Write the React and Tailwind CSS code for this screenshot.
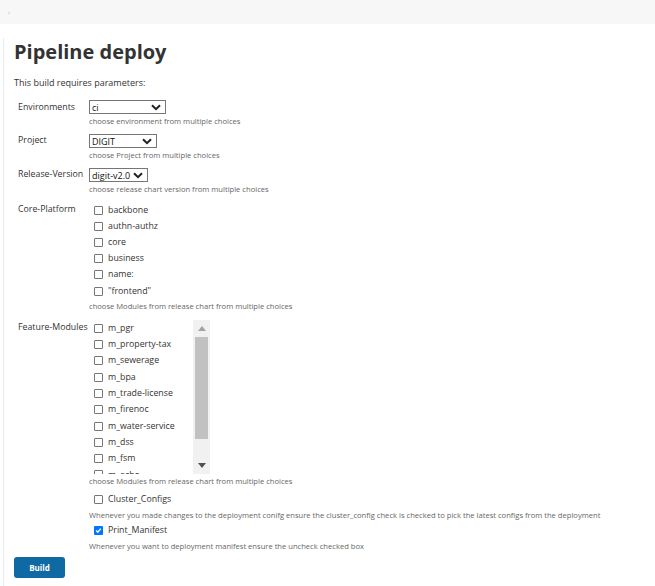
import React from 'react';

const corePlatform = ['backbone', 'authn-authz', 'core', 'business', 'name:', '"frontend"'];
const featureModules = [
  'm_pgr',
  'm_property-tax',
  'm_sewerage',
  'm_bpa',
  'm_trade-license',
  'm_firenoc',
  'm_water-service',
  'm_dss',
  'm_fsm',
  'm_echo',
];

function Chevron() {
  return (
    <svg width="10" height="7" viewBox="0 0 10 7" className="shrink-0">
      <path d="M1 1.2 L5 5.2 L9 1.2" fill="none" stroke="#222" strokeWidth="2" />
    </svg>
  );
}

function Select({ value, width }) {
  return (
    <div className={`flex h-[14px] shrink-0 items-center justify-between whitespace-nowrap border border-[#767676] bg-white pl-[2px] pr-[4px] text-[9px] leading-none text-[#111] ${width}`}>
      <span>{value}</span>
      <Chevron />
    </div>
  );
}

function Checkbox({ checked }) {
  if (checked) {
    return (
      <span className="flex h-[9px] w-[9px] items-center justify-center rounded-[1px] bg-[#0075ff]">
        <svg width="7" height="7" viewBox="0 0 7 7">
          <path d="M1.2 3.6 L2.8 5.2 L5.8 1.6" fill="none" stroke="#fff" strokeWidth="1.4" />
        </svg>
      </span>
    );
  }
  return <span className="block h-[9px] w-[9px] rounded-[1px] border border-[#767676] bg-white" />;
}

function CheckItem({ label, checked, height = 'h-[16px]' }) {
  return (
    <div className={`flex shrink-0 items-center whitespace-nowrap ${height}`}>
      <span className="ml-[5px] mr-[5px]">
        <Checkbox checked={checked} />
      </span>
      <span className="text-[8.8px] leading-none text-[#333]">{label}</span>
    </div>
  );
}

function Desc({ children, className = '' }) {
  return (
    <div className={`flex h-[12px] items-center whitespace-nowrap text-[7.6px] leading-none text-[#666] ${className}`}>
      {children}
    </div>
  );
}

function Label({ children, className = '' }) {
  return (
    <div className={`w-[75px] shrink-0 whitespace-nowrap pl-[4px] text-[8.8px] leading-none text-[#333] ${className}`}>
      {children}
    </div>
  );
}

export default function App() {
  return (
    <div className="min-h-[586px] w-[655px] bg-white font-['Open_Sans','Noto_Sans',sans-serif]">
      <div className="flex h-[24px] items-center bg-[#f7f7f7] pl-[8px]">
        <span className="text-[7px] leading-none text-[#bbb]">›</span>
      </div>
      <div className="ml-[3px] min-h-[562px] border-l border-[#e6ecef] pl-[10px]">
        <h1 className="mt-[14px] h-[28px] whitespace-nowrap text-[20px] font-bold leading-[28px] text-[#333]">Pipeline deploy</h1>
        <div className="mt-[8px] flex h-[16px] items-center whitespace-nowrap text-[9px] leading-none text-[#333]">
          This build requires parameters:
        </div>

        <div className="mt-[10px] flex">
          <Label className="mt-[3px]">Environments</Label>
          <div className="pb-[6px]">
            <Select value="ci" width="w-[77px]" />
            <Desc className="mt-[2px]">choose environment from multiple choices</Desc>
          </div>
        </div>

        <div className="flex">
          <Label className="mt-[2px]">Project</Label>
          <div className="pb-[6px]">
            <Select value="DIGIT" width="w-[68px]" />
            <Desc className="mt-[2px]">choose Project from multiple choices</Desc>
          </div>
        </div>

        <div className="flex">
          <Label className="mt-[2px]">Release-Version</Label>
          <div className="pb-[6px]">
            <Select value="digit-v2.0" width="w-[59px]" />
            <Desc className="mt-[2px]">choose release chart version from multiple choices</Desc>
          </div>
        </div>

        <div className="flex">
          <Label className="mt-[3px]">Core-Platform</Label>
          <div className="pb-[7px]">
            {corePlatform.map((item) => (
              <CheckItem key={item} label={item} height="h-[16.2px]" />
            ))}
            <Desc className="mt-[2px]">choose Modules from release chart from multiple choices</Desc>
          </div>
        </div>

        <div className="flex">
          <Label className="mt-[3px]">Feature-Modules</Label>
          <div>
            <div className="flex h-[154px] w-[121px]">
              <div className="h-full flex-1 overflow-hidden">
                {featureModules.map((item) => (
                  <CheckItem key={item} label={item} height="h-[16.3px]" />
                ))}
              </div>
              <div className="flex h-full w-[17px] shrink-0 flex-col items-center bg-[#f1f1f1]">
                <div className="flex h-[17px] items-center justify-center">
                  <svg width="8" height="5" viewBox="0 0 8 5">
                    <path d="M0 5 L4 0 L8 5 Z" fill="#a3a3a3" />
                  </svg>
                </div>
                <div className="h-[102px] w-[13px] bg-[#c1c1c1]" />
                <div className="flex-1" />
                <div className="flex h-[17px] items-center justify-center">
                  <svg width="8" height="5" viewBox="0 0 8 5">
                    <path d="M0 0 L8 0 L4 5 Z" fill="#505050" />
                  </svg>
                </div>
              </div>
            </div>
            <Desc className="mt-[2px]">choose Modules from release chart from multiple choices</Desc>
          </div>
        </div>

        <div className="ml-[75px] mt-[3px]">
          <CheckItem label="Cluster_Configs" />
          <Desc className="mt-[3px]">
            Whenever you made changes to the deployment conifg ensure the cluster_config check is checked to pick the latest configs from the deployment
          </Desc>
          <CheckItem label="Print_Manifest" checked />
          <Desc className="mt-[3px]">Whenever you want to deployment manifest ensure the uncheck checked box</Desc>
        </div>

        <button className="mt-[4px] flex h-[21px] w-[51px] items-center justify-center rounded-[3px] bg-[#0f6aa3] text-[8px] font-bold leading-none text-white">
          Build
        </button>
      </div>
    </div>
  );
}
